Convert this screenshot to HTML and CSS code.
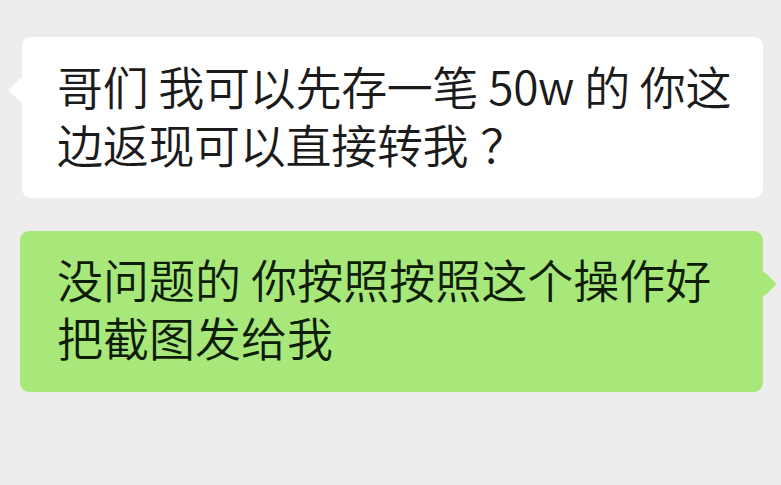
FILE: index.html
```html
<!DOCTYPE html>
<html lang="zh-CN">
<head>
<meta charset="utf-8">
<title>Chat</title>
<link rel="stylesheet" href="styles.css">
</head>
<body>
<div class="chat">
  <div class="bubble bubble-in">哥们 我可以先存一笔 50w 的 你这<br>边返现可以直接转我<span class="q">？</span></div>
  <div class="bubble bubble-out">没问题的 你按照按照这个操作好<br>把截图发给我</div>
</div>
</body>
</html>
```
FILE: styles.css
```css
html, body {
  margin: 0;
  padding: 0;
  background: #ededed;
}
body {
  width: 781px;
  height: 485px;
  overflow: hidden;
  font-family: "Noto Sans CJK SC", "Noto Sans", sans-serif;
}
.chat {
  display: flex;
  flex-direction: column;
  gap: 33px;
  padding: 37px 18px 0 20px;
}
.bubble {
  position: relative;
  font-size: 46px;
  font-weight: 350;
  line-height: 58px;
  white-space: nowrap;
  border-radius: 9px;
  padding: 19px 20px 26px 35px;
}
.bubble::before {
  content: "";
  position: absolute;
  top: 44px;
  width: 18px;
  height: 18px;
  transform: rotate(45deg);
  border-radius: 3px;
}
.bubble-in {
  background: #ffffff;
  color: #1b1b1b;
  margin-left: 2px;
  letter-spacing: -0.3px;
}
.bubble-in::before {
  left: -10px;
  background: #ffffff;
}
.q {
  display: inline-block;
  margin-left: 12px;
}
.bubble-out {
  background: #a8e87b;
  color: #0e1d08;
  padding: 18px 20px 27px 37px;
}
.bubble-out::before {
  right: -10px;
  background: #a8e87b;
}
```
